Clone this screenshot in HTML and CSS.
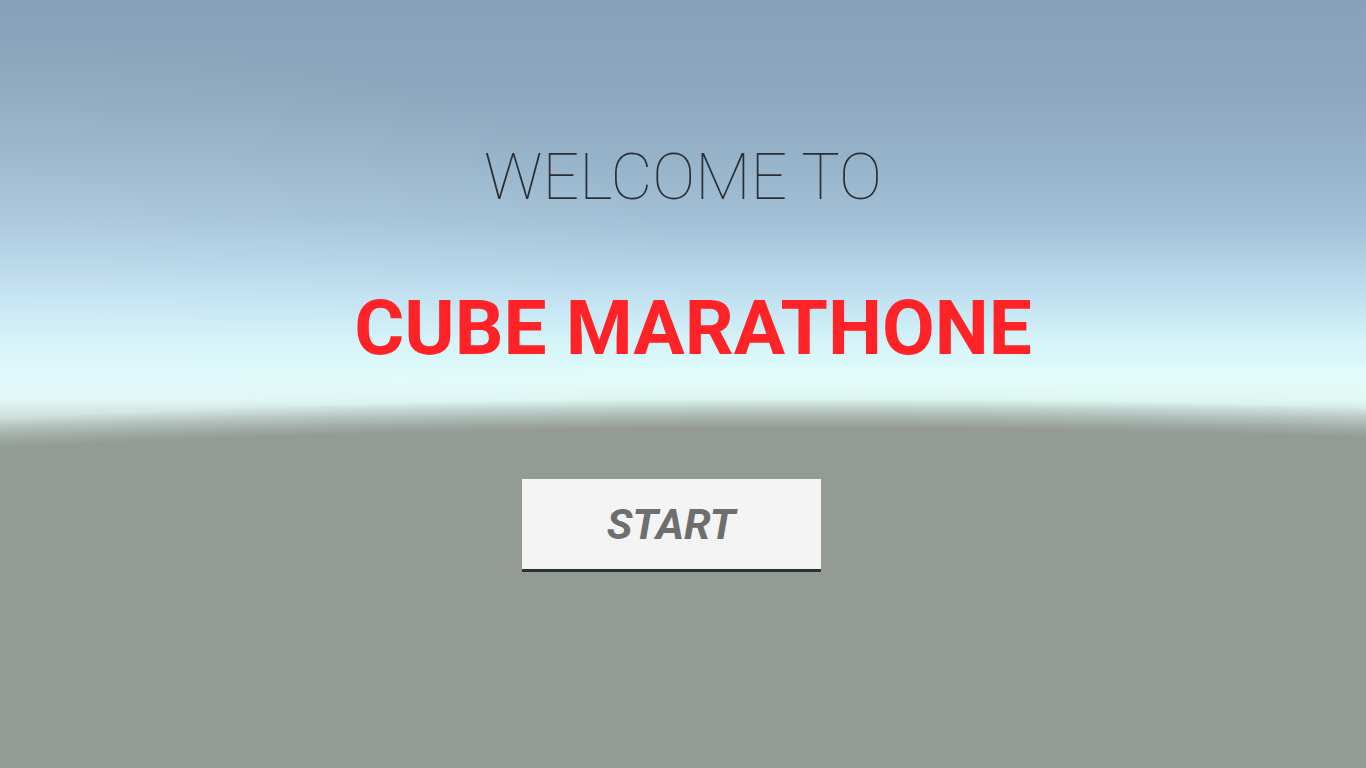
FILE: index.html
```html
<!DOCTYPE html>
<html lang="en">
<head>
<meta charset="utf-8">
<title>Cube Marathone</title>
<link rel="stylesheet" href="styles.css">
</head>
<body>
<main class="menu">
  <h2 class="welcome">WELCOME TO</h2>
  <h1 class="title">CUBE MARATHONE</h1>
  <button class="start-btn" type="button">START</button>
</main>
</body>
</html>
```
FILE: styles.css
```css
html, body {
  margin: 0;
  padding: 0;
  width: 100%;
  height: 100%;
}

body {
  font-family: Roboto, "Liberation Sans", sans-serif;
  background-color: #949b95;
  background-image:
    radial-gradient(ellipse 3060px 580px at 800px 1000px,
      #949b95 0%, #949b95 98.6%, rgba(165, 178, 173, 0.75) 101%, rgba(210, 236, 233, 0.25) 103.8%, rgba(225, 250, 247, 0) 106%),
    radial-gradient(ellipse 700px 260px at 0px 300px, rgba(220, 240, 255, 0.25), rgba(220, 240, 255, 0)),
    linear-gradient(to bottom,
      #87a2b8 0px,
      #8ea9bf 100px,
      #97b3c9 160px,
      #a3c0d6 220px,
      #b3d2e6 265px,
      #c4e4f3 305px,
      #d4f3f8 340px,
      #e0fcfa 375px,
      #e2f9f5 400px,
      #c7d5d0 420px,
      #949b95 440px);
  background-repeat: no-repeat;
  overflow: hidden;
}

.menu {
  height: 768px;
  display: flex;
  flex-direction: column;
  align-items: center;
  box-sizing: border-box;
  padding-top: 145px;
}

.welcome {
  margin: 0;
  font-weight: 100;
  font-size: 64.5px;
  line-height: 65px;
  color: #2a2f34;
}

.title {
  margin: 80px 0 0 20px;
  font-weight: 700;
  font-size: 76.5px;
  line-height: 77px;
  color: #ff2226;
}

.start-btn {
  margin-top: 112px;
  margin-left: -24px;
  width: 299px;
  height: 93px;
  box-sizing: border-box;
  border: none;
  border-bottom: 3px solid #2e3133;
  background: #f4f4f4;
  font-family: Roboto, "Liberation Sans", sans-serif;
  font-weight: 700;
  font-style: italic;
  font-size: 43px;
  line-height: 90px;
  padding: 0;
  color: #6e6e6e;
}
```
